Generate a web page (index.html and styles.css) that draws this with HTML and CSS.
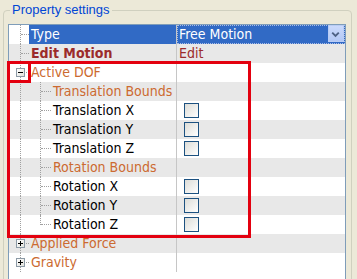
FILE: index.html
```html
<!DOCTYPE html>
<html lang="en">
<head>
    <meta charset="UTF-8">
    <title>Property settings</title>
    <link rel="stylesheet" href="styles.css">
</head>
<body>
    <fieldset class="settings">
        <legend>Property settings</legend>
        <div class="grid">
            <div class="row selected">
                <div class="name"><span class="tree branch"></span><span class="label">Type</span></div>
                <div class="value combo">
                    <span class="combo-text">Free Motion</span>
                    <span class="combo-btn">
                        <svg width="16" height="17" viewBox="0 0 16 17"><path d="M4.5 6.5 L8 10 L11.5 6.5" fill="none" stroke="#4d6185" stroke-width="2"/></svg>
                    </span>
                </div>
            </div>
            <div class="row alt">
                <div class="name"><span class="tree branch"></span><span class="label edit">Edit Motion</span></div>
                <div class="value edit-link">Edit</div>
            </div>
            <div class="row">
                <div class="name"><span class="tree branch toggle"><i class="box minus"></i></span><span class="label group">Active DOF</span></div>
                <div class="value"></div>
            </div>
            <div class="row alt">
                <div class="name"><span class="tree pass"></span><span class="tree branch"></span><span class="label group">Translation Bounds</span></div>
                <div class="value"></div>
            </div>
            <div class="row">
                <div class="name"><span class="tree pass"></span><span class="tree branch"></span><span class="label">Translation X</span></div>
                <div class="value"><span class="check"></span></div>
            </div>
            <div class="row alt">
                <div class="name"><span class="tree pass"></span><span class="tree branch"></span><span class="label">Translation Y</span></div>
                <div class="value"><span class="check"></span></div>
            </div>
            <div class="row">
                <div class="name"><span class="tree pass"></span><span class="tree branch"></span><span class="label">Translation Z</span></div>
                <div class="value"><span class="check"></span></div>
            </div>
            <div class="row alt">
                <div class="name"><span class="tree pass"></span><span class="tree branch"></span><span class="label group">Rotation Bounds</span></div>
                <div class="value"></div>
            </div>
            <div class="row">
                <div class="name"><span class="tree pass"></span><span class="tree branch"></span><span class="label">Rotation X</span></div>
                <div class="value"><span class="check"></span></div>
            </div>
            <div class="row alt">
                <div class="name"><span class="tree pass"></span><span class="tree branch"></span><span class="label">Rotation Y</span></div>
                <div class="value"><span class="check"></span></div>
            </div>
            <div class="row">
                <div class="name"><span class="tree pass"></span><span class="tree branch last"></span><span class="label">Rotation Z</span></div>
                <div class="value"><span class="check"></span></div>
            </div>
            <div class="row alt">
                <div class="name"><span class="tree branch toggle"><i class="box plus"></i></span><span class="label group">Applied Force</span></div>
                <div class="value"></div>
            </div>
            <div class="row">
                <div class="name"><span class="tree branch toggle"><i class="box plus"></i></span><span class="label group">Gravity</span></div>
                <div class="value"></div>
            </div>
        </div>
    </fieldset>

    <!-- highlight marks drawn over the grid -->
    <div class="mark mark-group"></div>
    <div class="mark mark-toggle"></div>
</body>
</html>
```

FILE: styles.css
```css
* {
    box-sizing: border-box;
}

body {
    margin: 0;
    height: 279px;
    overflow: hidden;
    background: #ece9d8;
    font-family: "DejaVu Sans Condensed", "Liberation Sans", sans-serif;
    font-size: 14px;
    color: #000;
}

.settings {
    margin: 2px 0 0 3px;
    width: 349px;
    height: 300px;
    padding: 6px 4px 0 4px;
    border: 1px solid #d0d0bf;
    border-radius: 4px;
}

.settings legend {
    margin-left: 2px;
    padding: 0 2px;
    font-family: "Liberation Sans", sans-serif;
    font-size: 13px;
    line-height: 16px;
    color: #0046d5;
}

.grid {
    width: 338px;
    height: 260px;
    background: #fff;
    border: 1px solid #7f9db9;
    border-right-color: #7f9db9;
}

.row {
    display: grid;
    grid-template-columns: 168px 1fr;
    height: 19px;
    line-height: 19px;
}

.row.alt {
    background: #e8e8e8;
}

.name {
    display: flex;
    border-right: 1px solid #c6c6c6;
    white-space: nowrap;
    overflow: hidden;
}

.label {
    flex: 1;
    padding-left: 2px;
}

.label.group {
    color: #cc6a30;
}

.label.edit {
    font-weight: bold;
    color: #9b2b2b;
}

.value {
    padding-left: 2px;
}

.edit-link {
    color: #9b2b2b;
}

/* tree lines */
.tree {
    position: relative;
    flex: none;
    width: 20px;
    height: 19px;
}

.tree.pass {
    width: 20px;
}

.tree.pass + .tree.branch {
    width: 22px;
}

.tree::before {
    content: "";
    position: absolute;
    left: 11px;
    top: 0;
    bottom: 0;
    border-left: 1px dotted #a0a0a0;
}

.tree.branch::after {
    content: "";
    position: absolute;
    left: 12px;
    right: 0;
    top: 9px;
    border-top: 1px dotted #a0a0a0;
}

.tree.branch.last::before {
    bottom: 9px;
}

.box {
    position: absolute;
    left: 7px;
    top: 5px;
    width: 9px;
    height: 9px;
    border: 1px solid #8c9aa6;
    background: linear-gradient(135deg, #fff, #e2e2dc);
    z-index: 1;
}

.box::before {
    content: "";
    position: absolute;
    left: 1px;
    top: 3px;
    width: 5px;
    height: 1px;
    background: #000;
}

.box.plus::after {
    content: "";
    position: absolute;
    left: 3px;
    top: 1px;
    width: 1px;
    height: 5px;
    background: #000;
}

/* selected row */
.selected .label {
    background: #316ac5;
    color: #fff;
}

.combo {
    display: flex;
    justify-content: space-between;
    background: #316ac5;
    color: #fff;
    border: 1px dotted #a9bce6;
    padding-left: 1px;
    line-height: 17px;
}

.combo-btn {
    display: flex;
    width: 16px;
    height: 17px;
    margin-top: -1px;
    background: linear-gradient(#cbdafc, #b3c8f5);
    border: 1px solid #b9ccf4;
}

.combo-btn svg {
    margin-left: -1px;
}

/* checkbox */
.check {
    display: inline-block;
    width: 15px;
    height: 15px;
    margin: 2px 0 0 5px;
    vertical-align: top;
    border: 1px solid #1c5180;
    background: linear-gradient(135deg, #dcdcd7, #fff);
}

/* red annotation boxes */
.mark {
    position: absolute;
    border: 3px solid #e3000f;
}

.mark-group {
    left: 7px;
    top: 61px;
    width: 244px;
    height: 177px;
}

.mark-toggle {
    left: 7px;
    top: 61px;
    width: 24px;
    height: 22px;
}
```
